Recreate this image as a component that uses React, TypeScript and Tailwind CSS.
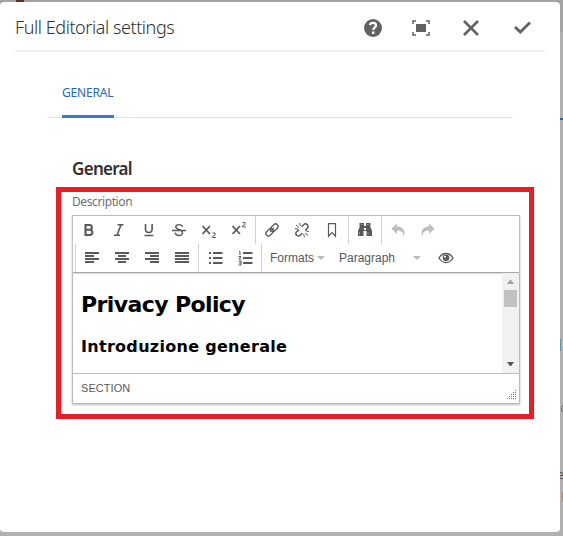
import React from 'react';

type IconProps = { children: React.ReactNode; className?: string };

function Tool({ children, className = 'text-[#595959]' }: IconProps) {
  return (
    <button className={`flex h-7 w-[30px] shrink-0 items-center justify-center ${className}`}>
      <svg width="16" height="16" viewBox="0 0 16 16" fill="none" stroke="currentColor" strokeWidth="1.6">
        {children}
      </svg>
    </button>
  );
}

function Lines({ rows }: { rows: [number, number][] }) {
  return (
    <Tool>
      {rows.map(([x, w], i) => (
        <rect key={i} x={x} y={2 + i * 3} width={w} height="2" fill="currentColor" stroke="none" />
      ))}
    </Tool>
  );
}

function Caret() {
  return (
    <svg width="8" height="4" viewBox="0 0 8 4" fill="#b5bcc2" className="shrink-0">
      <path d="M0 0h8L4 4z" />
    </svg>
  );
}

function Toolbar() {
  return (
    <div className="h-[57px] shrink-0 border-b border-[#a8a8a8] shadow-[0_1px_1px_#ddd]">
      <div className="flex h-7">
        <div className="flex w-[182px] pl-px">
          <Tool><path d="M4.500 3h4a2.300 2.300 0 0 1 0 4.700h-4zM4.500 7.700h4.700a2.700 2.700 0 0 1 0 5.300H4.500z" strokeWidth="2.100" /></Tool>
          <Tool><path d="M6.500 2.700h6M3 13.300h6M10 2.700 6 13.300" strokeWidth="1.600" /></Tool>
          <Tool><path d="M4.500 2v5.200a3.300 3.300 0 0 0 6.600 0V2M3.500 13.500h9" strokeWidth="1.600" /></Tool>
          <Tool><path d="M11.500 4.800C11 3 9.800 2.600 8 2.600 5.800 2.600 4.800 3.700 4.800 5c0 3.200 6.700 1.800 6.700 5.500 0 2-1.500 3-3.500 3s-3.500-1-3.800-2.800M1 8.500h14" strokeWidth="1.400" /></Tool>
          <Tool><path d="m1.500 4 7.500 8M9 4l-7.500 8" strokeWidth="1.800" /><path d="M11.500 11h2.500v2l-2.500 1.500v1H15" strokeWidth="1" /></Tool>
          <Tool><path d="m1.500 4 7.500 8M9 4l-7.500 8" strokeWidth="1.800" /><path d="M11.500 .5H14v2L11.500 4v1H15" strokeWidth="1" /></Tool>
        </div>
        <div className="flex border-l border-[#d2d2d2] px-px">
          <Tool>
            <g transform="rotate(-45 8 8)" strokeWidth="1.300"><rect x=".5" y="5.500" width="8.500" height="5" rx="2.500" /><rect x="7" y="5.500" width="8.500" height="5" rx="2.500" /><path d="M5 8h6" strokeWidth="1" /></g>
          </Tool>
          <Tool>
            <g transform="rotate(-45 8 8)" strokeWidth="1.500"><path d="M6 5.500H3a2.500 2.500 0 0 0 0 5h3M10 5.500h3a2.500 2.500 0 0 1 0 5h-3" /></g>
            <path d="m2 3 3 2.500M5.500 1l1 3M1 6.500l3 .5M11 11l3 2.500M9.500 12l1 3M12 9l3 .5" strokeWidth="1" />
          </Tool>
          <Tool><path d="M4.500 1.700h7v12.500L8 10.700l-3.500 3.500z" strokeWidth="1.200" /></Tool>
        </div>
        <div className="flex border-l border-[#d2d2d2] px-px">
          <Tool><path fill="currentColor" stroke="none" d="M2.500 1H7v3h2V1h4.500v3H13l2 5v5H9.500V9h-3v5H1V9l2-5h-.5zM7 6v2h2V6z" /><path d="M4 2.500h2M10 2.500h2M2.500 10v3M11 10v3" stroke="#aaa" strokeWidth=".7" /></Tool>
        </div>
        <div className="flex border-l border-[#d2d2d2] px-px">
          <Tool className="text-[#bdbdbd]"><path fill="currentColor" stroke="none" d="M7 1.500v3c5 0 9.500 4 6.500 10 .2-4-2-6-6.500-6v3.500l-5.500-5.200z" /></Tool>
          <Tool className="text-[#bdbdbd]"><path fill="currentColor" stroke="none" d="M9 1.500v3c-5 0-9.500 4-6.500 10-.2-4 2-6 6.500-6v3.500l5.500-5.200z" /></Tool>
        </div>
      </div>
      <div className="flex h-7 items-center pl-0.5 font-['Liberation_Sans',sans-serif] text-[12px] text-[#595959]">
        <div className="flex border-l border-[#d2d2d2] px-px">
          <Lines rows={[[1, 14], [1, 9], [1, 14], [1, 9]]} />
          <Lines rows={[[1, 14], [4, 8], [1, 14], [4, 8]]} />
          <Lines rows={[[1, 14], [6, 9], [1, 14], [6, 9]]} />
          <Lines rows={[[1, 14], [1, 14], [1, 14], [1, 14]]} />
        </div>
        <div className="flex border-l border-[#d2d2d2] px-px">
          <Tool><path d="M6 3h9.500M6 8h9.500M6 13h9.500M2 3h2M2 8h2M2 13h2" strokeWidth="2" /></Tool>
          <Tool><path d="M6 3h9.500M6 8h9.500M6 13h9.500" strokeWidth="2" /><path d="M2 1.500h1V5M1.500 6.500H4L2 9h2.300M1.500 11H4v4H1.500M2 13h2" strokeWidth="1" /></Tool>
        </div>
        <div className="flex h-7 items-center border-l border-[#d2d2d2] pl-2">
          <span className="w-[47px]">Formats</span>
          <Caret />
          <span className="ml-[14px] w-[74px]">Paragraph</span>
          <Caret />
          <span className="ml-[10px]">
            <Tool><path d="M1 8c3.500-6 10.500-6 14 0-3.500 6-10.500 6-14 0z" strokeWidth="1.300" /><circle cx="8" cy="7.700" r="3.300" fill="currentColor" stroke="none" /><circle cx="7" cy="6.700" r="1" fill="#fff" stroke="none" /></Tool>
          </span>
        </div>
      </div>
    </div>
  );
}

function Editor() {
  return (
    <div className="flex h-[189px] w-[448px] flex-col border border-[#bcbcbc] bg-white shadow-[0_1px_2px_#bbb]">
      <Toolbar />
      <div className="flex h-[100px] shrink-0">
        <div className="flex-1 pl-2 font-['DejaVu_Sans',Verdana,sans-serif] font-bold text-black">
          <h1 className="mt-[16px] h-8 text-[22px] leading-8 tracking-[-0.6px] whitespace-nowrap">Privacy Policy</h1>
          <h2 className="mt-[14px] h-6 text-[16px] leading-6 tracking-[0.3px] whitespace-nowrap">Introduzione generale</h2>
        </div>
        <div className="flex w-[17px] flex-col items-center bg-[#f1f1f1]">
          <svg width="7" height="4" viewBox="0 0 7 4" className="mt-[7px]" fill="#a3a3a3"><path d="M3 0h1l3 4H0z" /></svg>
          <div className="mt-[6px] h-[17px] w-[13px] bg-[#c1c1c1]" />
          <svg width="7" height="4" viewBox="0 0 7 4" className="mt-auto mb-[7px]" fill="#505050"><path d="M0 0h7L4 4H3z" /></svg>
        </div>
      </div>
      <div className="flex flex-1 items-center justify-between border-t border-[#bcbcbc] pl-2 font-['Liberation_Sans',sans-serif] text-[11px] text-[#595959]">
        <span className="tracking-[.05px]">SECTION</span>
        <svg width="9" height="9" viewBox="0 0 9 9" className="mt-[12px] mr-[3px]" fill="#777" shapeRendering="crispEdges">
          {[0, 1, 2, 3, 4].flatMap((row) =>
            Array.from({ length: row + 1 }, (_, i) => <rect key={`${row}-${i}`} x={8 - i * 2} y={row * 2} width="1" height="1" />),
          )}
        </svg>
      </div>
    </div>
  );
}

function HeaderIcons() {
  return (
    <div className="flex items-center pt-[3px] text-[#626262]">
      <svg width="18" height="18" viewBox="0 0 18 18" fill="none" className="mr-[30px]">
        <circle cx="9" cy="9" r="9" fill="currentColor" />
        <path d="M6 6.200C6.500 3 12 3.200 12 6.400c0 2-2.800 2.400-2.800 4.600" stroke="#fff" strokeWidth="2.200" />
        <rect x="7.900" y="12.500" width="2.500" height="2.500" fill="#fff" />
      </svg>
      <svg width="18" height="16" viewBox="0 0 18 16" fill="none" stroke="currentColor" strokeWidth="1.500" className="mr-[33px]">
        <path d="M1 4V1h3M14 1h3v3M17 12v3h-3M4 15H1v-3" />
        <rect x="4" y="4" width="10" height="8" fill="currentColor" stroke="none" />
      </svg>
      <svg width="16" height="16" viewBox="0 0 16 16" fill="none" stroke="currentColor" strokeWidth="2.600" className="mr-[35px]">
        <path d="m1 1 14 14M15 1 1 15" />
      </svg>
      <svg width="17" height="13" viewBox="0 0 17 13" fill="none" stroke="currentColor" strokeWidth="2.800">
        <path d="m1 6 5.300 5L16 1.500" />
      </svg>
    </div>
  );
}

export default function App() {
  return (
    <div className="relative h-[536px] w-[563px] overflow-hidden bg-[linear-gradient(#a3a3a3_32px,#b0b0b0_32px)] pt-0.5 font-['Noto_Sans',sans-serif]">
      <div className="absolute top-0 left-4 h-0.5 w-2 bg-[#652d2d]" />
      <div className="absolute top-[118px] left-[560px] h-0.5 w-[3px] bg-[#2565a7]" />
      <div className="absolute top-[339px] left-[560px] h-3 w-px bg-[#5795ad]" />
      <div className="absolute top-[340px] left-[562px] h-1.5 w-px bg-[#c1b88c]" />
      <div className="absolute top-[405px] left-[561px] h-[7px] w-[5px] rounded-full border border-[#6c6460]" />
      <span className="absolute top-[466px] left-[557px] text-[13px] leading-4 text-[#555]">e</span>
      <div className="absolute top-[492px] left-[562px] h-2.5 w-px bg-[#b98b65]" />
      <main className="relative h-[530px] w-[560px] rounded-[4px] bg-white">
        <header className="mx-[15px] flex h-[50px] items-center justify-between border-b-2 border-[#f0f0f0] pr-[14px]">
          <h1 className="pt-0.5 text-[18px] font-light tracking-[-0.43px] whitespace-nowrap text-[#303030]">Full Editorial settings</h1>
          <HeaderIcons />
        </header>
        <nav className="mt-[26px] ml-[47px] flex h-[40px] w-[466px] border-b border-[#e5e5e5] pl-[15px]">
          <button className="-mb-px h-[40px] w-[52px] border-b-[3px] border-[#4178cd] pb-[8px] text-left text-[12px] tracking-[-0.2px] whitespace-nowrap text-[#2866bb]">GENERAL</button>
        </nav>
        <h2 className="mt-[39px] ml-[72px] h-[30px] text-[17px] leading-6 font-semibold tracking-[-0.7px] text-[#303030]">General</h2>
        <section className="ml-14 h-[232px] w-[478px] border-[5px] border-[#ed1c24] pl-[11px]">
          <p className="h-[23px] text-[12px] leading-5 tracking-[-0.4px] text-[#707070]">Description</p>
          <Editor />
        </section>
      </main>
    </div>
  );
}
